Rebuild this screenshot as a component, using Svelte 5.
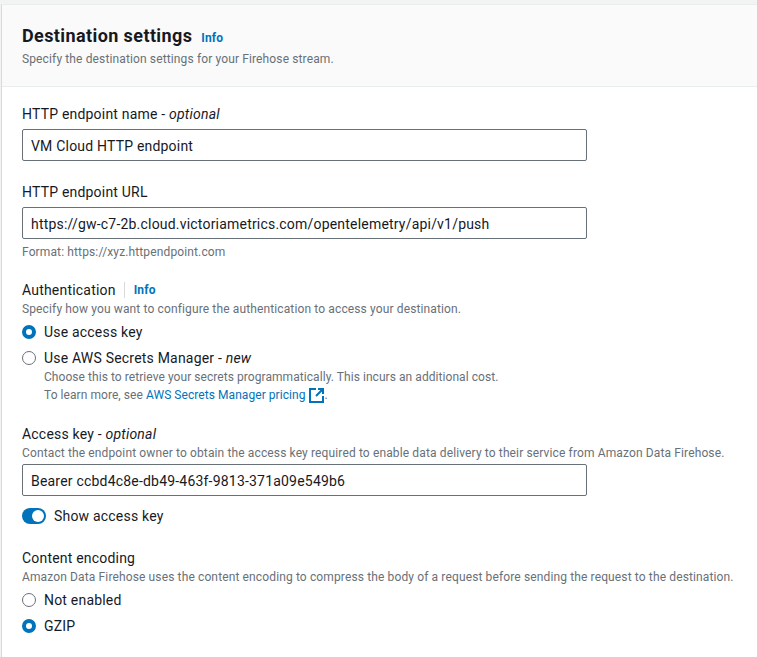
<script lang="ts">
	const hintText = 'Specify how you want to configure the authentication to access your destination.';
</script>

<div class="page">
	<div class="card">
		<header>
			<h2>Destination settings <a href="#info" class="info">Info</a></h2>
			<p class="desc">Specify the destination settings for your Firehose stream.</p>
		</header>
		<div class="body">
			<section>
				<div class="label">HTTP endpoint name - <i>optional</i></div>
				<div class="input">VM Cloud HTTP endpoint</div>
			</section>
			<section class="short">
				<div class="label">HTTP endpoint URL</div>
				<div class="input">https://gw-c7-2b.cloud.victoriametrics.com/opentelemetry/api/v1/push</div>
				<p class="hint format">Format: https://xyz.httpendpoint.com</p>
			</section>
			<section class="short">
				<div class="label tight">Authentication<span class="sep"></span><a href="#info" class="info">Info</a></div>
				<p class="hint">{hintText}</p>
				<div class="radio first"><span class="dot on"></span>Use access key</div>
				<div class="radio"><span class="dot"></span>Use AWS Secrets Manager - <i>new</i></div>
				<div class="radio-desc">
					<p>Choose this to retrieve your secrets programmatically. This incurs an additional cost.</p>
					<p>
						To learn more, see <a href="#pricing">AWS Secrets Manager pricing</a>
						<svg width="16" height="16" viewBox="0 0 16 16" fill="none" stroke="#0073bb" stroke-width="2">
							<path d="M7 2H1V15H14V9" />
							<path d="M9 2H14V7M14 2L7 9" />
						</svg>.
					</p>
				</div>
			</section>
			<section class="short">
				<div class="label tight">Access key - <i>optional</i></div>
				<p class="hint">Contact the endpoint owner to obtain the access key required to enable data delivery to their service from Amazon Data Firehose.</p>
				<div class="input key">Bearer ccbd4c8e-db49-463f-9813-371a09e549b6</div>
				<div class="toggle-row"><span class="toggle"><span class="knob"></span></span>Show access key</div>
			</section>
			<section>
				<div class="label tight">Content encoding</div>
				<p class="hint">Amazon Data Firehose uses the content encoding to compress the body of a request before sending the request to the destination.</p>
				<div class="radio first"><span class="dot"></span>Not enabled</div>
				<div class="radio"><span class="dot on"></span>GZIP</div>
			</section>
		</div>
	</div>
</div>

<style>
	:global(body) {
		margin: 0;
		background: #fff;
	}

	.page {
		width: 757px;
		height: 657px;
		overflow: hidden;
		box-sizing: border-box;
		padding: 4px 0 0 1px;
		background: #f2f3f3;
		color: #16191f;
		font-family: Roboto, sans-serif;
		font-size: 14px;
		line-height: 20px;
		letter-spacing: 0.2px;
	}

	.card {
		height: 100%;
		background: #fff;
		border-left: 1px solid #d5dbdb;
		border-top: 1px solid #eaeded;
		box-sizing: border-box;
	}

	header {
		height: 82px;
		box-sizing: border-box;
		padding: 19px 20px 0;
		background: #fafafa;
		border-bottom: 1px solid #eaeded;
	}

	h2 {
		margin: 0;
		font-size: 18px;
		line-height: 24px;
		font-weight: 700;
		letter-spacing: 0.4px;
	}

	.info {
		margin-left: 4px;
		font-size: 12px;
		font-weight: 700;
		letter-spacing: 0.2px;
		color: #0073bb;
		text-decoration: none;
	}

	p {
		margin: 0;
	}

	.desc,
	.hint,
	.radio-desc {
		font-size: 12px;
		line-height: 16px;
		letter-spacing: 0.13px;
		color: #687078;
	}

	.desc {
		margin-top: 1px;
	}

	.body {
		padding: 17px 20px 0;
	}

	section {
		margin-bottom: 21px;
	}

	section.short {
		margin-bottom: 20px;
	}

	.label {
		display: flex;
		align-items: center;
		white-space: pre;
		margin-bottom: 5px;
	}

	.label.tight {
		margin-bottom: 1px;
	}

	.sep {
		width: 1px;
		height: 16px;
		margin: 0 4px 0 8px;
		background: #d5dbdb;
	}

	.label .info {
		margin-left: 5px;
	}

	.input {
		width: 565px;
		height: 32px;
		box-sizing: border-box;
		padding: 6px 8px 4px;
		border: 1px solid #687078;
		border-radius: 2px;
		background: #fff;
	}

	.input.key {
		margin-top: 3px;
	}

	.hint.format {
		margin-top: 5px;
	}

	.radio {
		display: flex;
		align-items: center;
		height: 20px;
		margin-top: 6px;
		white-space: pre;
	}

	.radio.first {
		margin-top: 5px;
	}

	.dot {
		width: 12px;
		height: 12px;
		margin-right: 8px;
		border: 1px solid #687078;
		border-radius: 50%;
		background: #fff;
	}

	.dot.on {
		width: 6px;
		height: 6px;
		border: 4px solid #0073bb;
	}

	.radio-desc {
		margin: 0 0 0 22px;
		line-height: 18px;
		letter-spacing: 0.06px;
	}

	.radio-desc a {
		color: #0073bb;
		text-decoration: none;
	}

	.radio-desc svg {
		vertical-align: -4px;
	}

	.toggle-row {
		display: flex;
		align-items: center;
		height: 20px;
		margin-top: 10px;
		margin-bottom: 22px;
	}

	.toggle {
		display: flex;
		justify-content: flex-end;
		align-items: center;
		width: 22px;
		height: 16px;
		margin-right: 8px;
		padding-right: 2px;
		border-radius: 8px;
		background: #0073bb;
	}

	.knob {
		width: 12px;
		height: 12px;
		border-radius: 50%;
		background: #fff;
	}
</style>
